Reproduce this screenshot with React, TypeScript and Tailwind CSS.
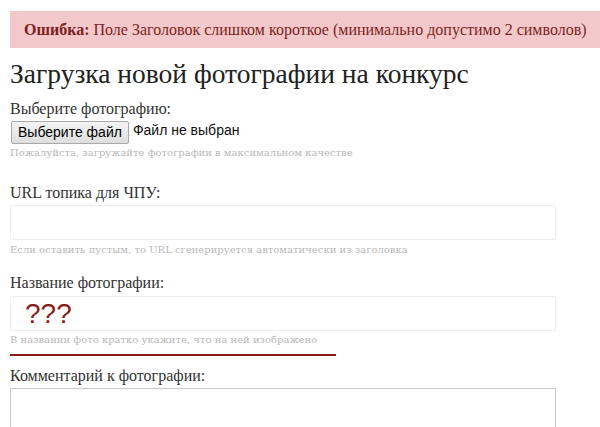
import React from "react";

const serif = { fontFamily: '"Liberation Serif", "DejaVu Serif", serif' };
const slab = { fontFamily: '"DejaVu Serif", "Liberation Serif", serif' };
const sans = { fontFamily: '"Liberation Sans", Arial, sans-serif' };

export default function App() {
  return (
    <div className="w-[600px] h-[427px] overflow-hidden bg-white" style={serif}>
      <div className="pt-[11px] pl-[10px]">
        <div className="h-[37px] bg-[#f2c8ca] flex items-center pl-[14px] text-[16px] text-[#7d1f1f] whitespace-nowrap">
          <span className="font-bold mr-[4px]">Ошибка:</span>
          <span>Поле Заголовок слишком короткое (минимально допустимо 2 символов)</span>
        </div>
      </div>
      <div className="pl-[10px] pr-[44px]">
        <h1 className="mt-[10px] text-[27.5px] leading-[31px] text-[#222]">Загрузка новой фотографии на конкурс</h1>

        <div className="mt-[11px] text-[16px] leading-[18px] text-[#333]">Выберите фотографию:</div>
        <div className="mt-[1px] flex items-end h-[25px]">
          <button className="ml-[1px] h-[23px] px-[6px] border border-[#a9a9a9] rounded-[2px] bg-gradient-to-b from-[#f4f4f4] to-[#dedede] text-[14px] text-black" style={sans}>
            Выберите файл
          </button>
          <span className="ml-[4px] mb-[3px] text-[14px] text-[#111]" style={sans}>Файл не выбран</span>
        </div>
        <div className="mt-[2px] text-[10px] leading-[14px] text-[#b8b8b8]" style={slab}>Пожалуйста, загружайте фотографии в максимальном качестве</div>

        <div className="mt-[24px] text-[16px] leading-[18px] text-[#333]">URL топика для ЧПУ:</div>
        <div className="mt-[3px] h-[35px] border border-[#eeeeee] rounded-[2px]"></div>
        <div className="mt-[3px] text-[10px] leading-[14px] text-[#b8b8b8]" style={slab}>Если оставить пустым, то URL сгенерируется автоматически из заголовка</div>

        <div className="mt-[17px] text-[16px] leading-[18px] text-[#333]">Название фотографии:</div>
        <div className="mt-[4px] h-[35px] border border-[#eeeeee] rounded-[2px] flex items-center pl-[14px]">
          <span className="text-[28px] leading-none text-[#8b1a1a]" style={sans}>???</span>
        </div>
        <div className="mt-[2px] text-[10px] leading-[14px] text-[#b8b8b8]" style={slab}>В названии фото кратко укажите, что на ней изображено</div>
        <div className="mt-[7px] w-[326px] h-[2px] bg-[#8b1a1a]"></div>

        <div className="mt-[11px] text-[16px] leading-[18px] text-[#333]">Комментарий к фотографии:</div>
        <div className="mt-[3px] h-[60px] border border-[#c8c8c8]"></div>
      </div>
    </div>
  );
}
